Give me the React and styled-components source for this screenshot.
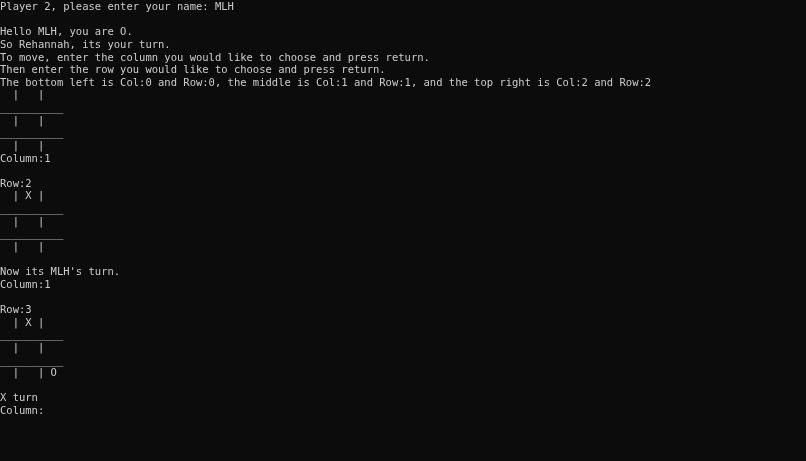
import React from 'react';
import styled, { createGlobalStyle } from 'styled-components';

const GlobalStyle = createGlobalStyle`
    html, body {
        margin: 0;
        padding: 0;
        background: #0c0c0c;
    }
`;

// 콘솔 창 전체
const Console = styled.div`
    width: 806px;
    height: 461px;
    background: #0c0c0c;
    color: #cccccc;
    font-family: 'DejaVu Sans Mono', 'Liberation Mono', monospace;
    font-size: 10.5px;
    line-height: 12.625px;
    overflow: hidden;
    display: flex;
    flex-direction: column;
    filter: grayscale(1);
`;

// 한 줄
const Line = styled.div`
    white-space: pre;
    height: 12.625px;
`;

const lines = [
    'Player 2, please enter your name: MLH',
    '',
    'Hello MLH, you are O.',
    'So Rehannah, its your turn.',
    'To move, enter the column you would like to choose and press return.',
    'Then enter the row you would like to choose and press return.',
    'The bottom left is Col:0 and Row:0, the middle is Col:1 and Row:1, and the top right is Col:2 and Row:2',
    '  |   |',
    '__________',
    '  |   |',
    '__________',
    '  |   |',
    'Column:1',
    '',
    'Row:2',
    '  | X |',
    '__________',
    '  |   |',
    '__________',
    '  |   |',
    '',
    "Now its MLH's turn.",
    'Column:1',
    '',
    'Row:3',
    '  | X |',
    '__________',
    '  |   |',
    '__________',
    '  |   | O',
    '',
    'X turn',
    'Column:',
];

const App = () => (
    <>
        <GlobalStyle />
        <Console>
            {lines.map((text, i) => (
                <Line key={i}>{text}</Line>
            ))}
        </Console>
    </>
);

export default App;
